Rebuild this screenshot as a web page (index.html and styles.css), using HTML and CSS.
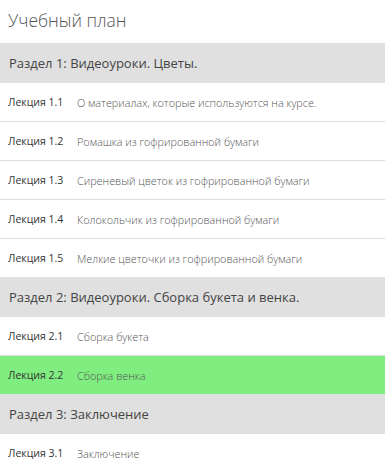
FILE: index.html
```html
<!DOCTYPE html>
<html lang="ru">
<head>
  <meta charset="UTF-8" />
  <title>Учебный план</title>
  <link rel="stylesheet" href="styles.css">
</head>
<body>
  <h1 class="plan-title">Учебный план</h1>

  <div class="section">Раздел 1: Видеоуроки. Цветы.</div>
  <div class="lessons">
    <div class="lesson"><span class="lesson-num">Лекция 1.1</span><span class="lesson-name">О материалах, которые используются на курсе.</span></div>
    <div class="lesson"><span class="lesson-num">Лекция 1.2</span><span class="lesson-name">Ромашка из гофрированной бумаги</span></div>
    <div class="lesson"><span class="lesson-num">Лекция 1.3</span><span class="lesson-name">Сиреневый цветок из гофрированной бумаги</span></div>
    <div class="lesson"><span class="lesson-num">Лекция 1.4</span><span class="lesson-name">Колокольчик из гофрированной бумаги</span></div>
    <div class="lesson"><span class="lesson-num">Лекция 1.5</span><span class="lesson-name">Мелкие цветочки из гофрированной бумаги</span></div>
  </div>

  <div class="section">Раздел 2: Видеоуроки. Сборка букета и венка.</div>
  <div class="lessons">
    <div class="lesson"><span class="lesson-num">Лекция 2.1</span><span class="lesson-name">Сборка букета</span></div>
    <div class="lesson active"><span class="lesson-num">Лекция 2.2</span><span class="lesson-name">Сборка венка</span></div>
  </div>

  <div class="section">Раздел 3: Заключение</div>
  <div class="lessons">
    <div class="lesson"><span class="lesson-num">Лекция 3.1</span><span class="lesson-name">Заключение</span></div>
  </div>
</body>
</html>
```

FILE: styles.css
```css
body {
  margin: 0;
  font-family: 'Open Sans', 'Noto Sans', sans-serif;
  background: #fff;
  color: #444;
}
.plan-title {
  margin: 0;
  height: 43px;
  padding: 0 8px;
  font-size: 17.5px;
  font-weight: 300;
  line-height: 40px;
  color: #555;
}
.section {
  height: 40px;
  line-height: 40px;
  padding: 0 9px;
  background: #e0e0e0;
  font-size: 13px;
  color: #444;
}
.lesson {
  display: flex;
  align-items: center;
  height: 38px;
  padding: 0 8px;
  border-bottom: 1px solid #ddd;
  font-size: 10.5px;
}
.lesson:last-child {
  border-bottom: none;
}
.lesson.active {
  background: #80ed80;
}
.lesson-num {
  width: 69px;
  color: #333;
}
.lesson-name {
  font-size: 10.8px;
  color: #555;
  font-weight: 300;
}
```
